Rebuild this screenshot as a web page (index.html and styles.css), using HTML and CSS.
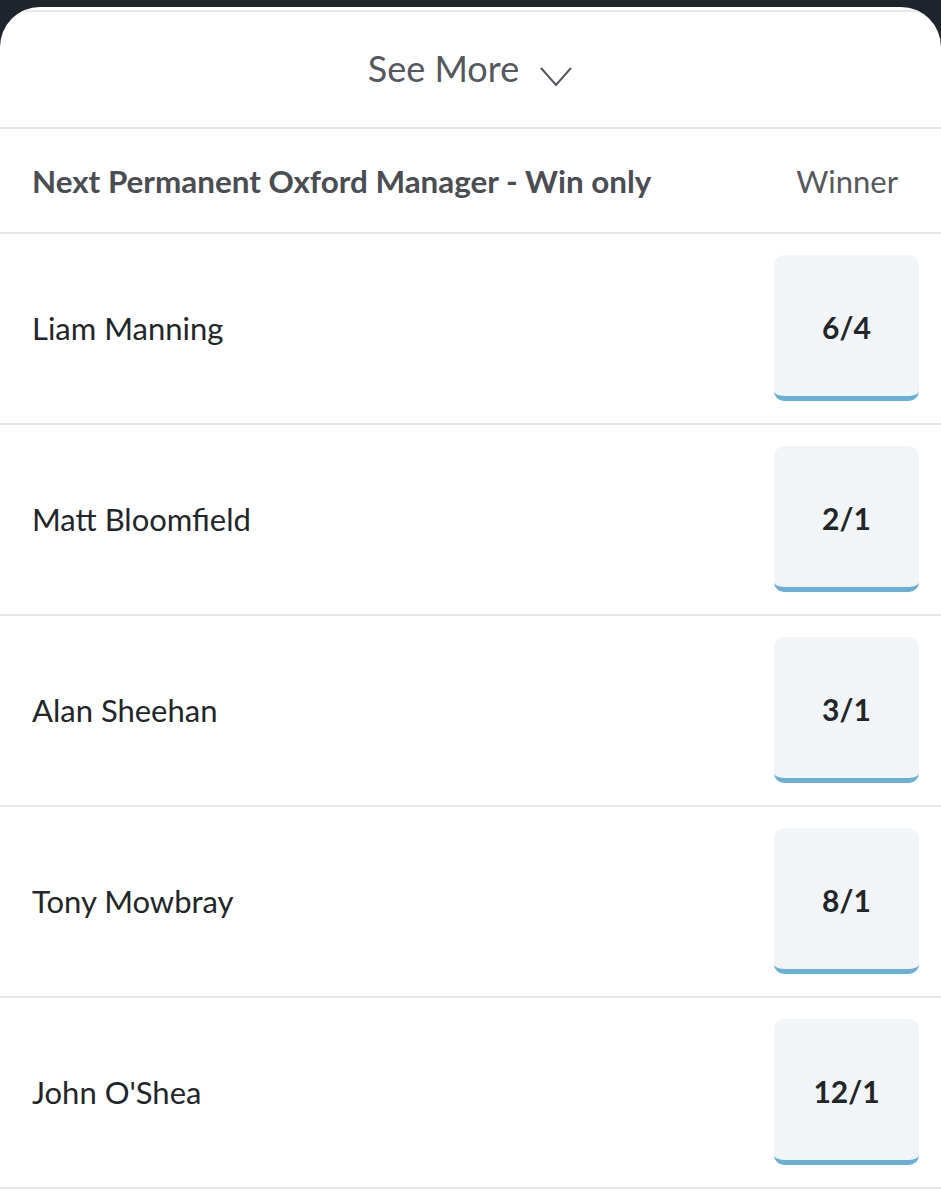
FILE: index.html
```html
<!DOCTYPE html>
<html>
<head>
<meta charset="utf-8">
<link rel="stylesheet" href="styles.css">
</head>
<body>
<div class="card">
  <div class="top-line"></div>
  <div class="see-more">
    <span>See More</span>
    <svg class="chev" width="34" height="24" viewBox="0 0 34 24"><polyline points="2,4 17,21 32,4" fill="none" stroke="#55585c" stroke-width="2"/></svg>
  </div>
  <div class="header">
    <span class="title">Next Permanent Oxford Manager - Win only</span>
    <span class="col">Winner</span>
  </div>
  <div class="row"><span class="name">Liam Manning</span><div class="odds">6/4</div></div>
  <div class="row"><span class="name">Matt Bloomfield</span><div class="odds">2/1</div></div>
  <div class="row"><span class="name">Alan Sheehan</span><div class="odds">3/1</div></div>
  <div class="row"><span class="name">Tony Mowbray</span><div class="odds">8/1</div></div>
  <div class="row"><span class="name">John O'Shea</span><div class="odds">12/1</div></div>
</div>
</body>
</html>
```
FILE: styles.css
```css
html, body {
  margin: 0;
  padding: 0;
  background: #1f252c;
  font-family: Lato, "Open Sans", sans-serif;
}
body {
  padding-top: 7px;
}
.card {
  background: #ffffff;
  border-radius: 40px 40px 0 0;
  overflow: hidden;
  min-height: 1193px;
}
.top-line {
  height: 2px;
  margin-top: 3px;
  background: #e8e8e8;
}
.see-more {
  height: 115px;
  display: flex;
  align-items: center;
  justify-content: center;
  gap: 20px;
  color: #55585c;
  font-size: 36px;
  border-bottom: 2px solid #e6e6e6;
}
.see-more span {
  margin-top: -4px;
}
.chev {
  margin-top: 12px;
}
.header {
  height: 103px;
  display: flex;
  align-items: center;
  justify-content: space-between;
  padding: 0 43px 0 32px;
  border-bottom: 2px solid #e6e6e6;
}
.title {
  font-weight: 700;
  font-size: 31.4px;
  color: #4a4d52;
}
.col {
  font-size: 31px;
  color: #55585c;
}
.row {
  display: flex;
  align-items: center;
  justify-content: space-between;
  padding: 21px 22px 22px 32px;
  border-bottom: 2px solid #e6e6e6;
}
.name {
  font-size: 31px;
  color: #222629;
}
.odds {
  width: 145px;
  box-sizing: content-box;
  background: #f2f5f7;
  border-radius: 10px;
  border-bottom: 5px solid #6aafd5;
  display: flex;
  align-items: center;
  justify-content: center;
  font-weight: 700;
  font-size: 30px;
  color: #222629;
  padding-top: 2px;
  height: 139px;
}
```
